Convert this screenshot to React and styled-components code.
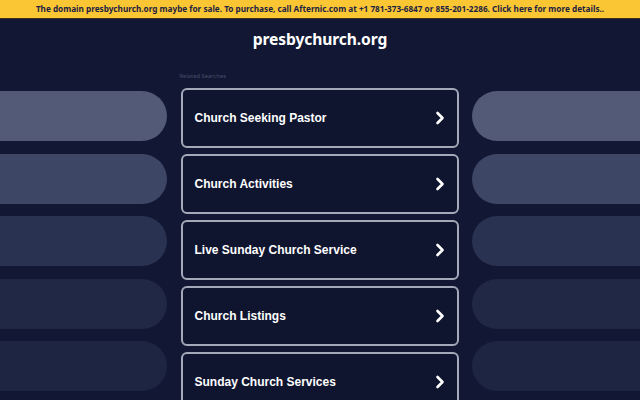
import React from "react";
import styled, { createGlobalStyle } from "styled-components";

const searches = [
  "Church Seeking Pastor",
  "Church Activities",
  "Live Sunday Church Service",
  "Church Listings",
  "Sunday Church Services",
];

const pillColors = ["#525a78", "#3e4665", "#2a3251", "#202846", "#1d2543"];

const Chevron = () => (
  <svg width="10" height="14" viewBox="0 0 10 14" fill="none">
    <path
      d="M2.5 2L7.5 7L2.5 12"
      stroke="#ffffff"
      strokeWidth="2.6"
      strokeLinecap="round"
      strokeLinejoin="round"
    />
  </svg>
);

const App = () => {
  return (
    <>
      <GlobalStyle />
      <Page>
        <TopBar>
          The domain presbychurch.org maybe for sale. To purchase, call
          Afternic.com at +1 781-373-6847 or 855-201-2286. Click here for more
          details..
        </TopBar>
        <Title>presbychurch.org</Title>
        <Main>
          <Side>
            {pillColors.map((c, idx) => (
              <Pill key={idx} $color={c} $side="left" />
            ))}
          </Side>
          <Center>
            <Label>Related Searches</Label>
            <List>
              {searches.map((s) => (
                <Card key={s}>
                  <span>{s}</span>
                  <Chevron />
                </Card>
              ))}
            </List>
          </Center>
          <Side>
            {pillColors.map((c, idx) => (
              <Pill key={idx} $color={c} $side="right" />
            ))}
          </Side>
        </Main>
      </Page>
    </>
  );
};

const GlobalStyle = createGlobalStyle`
  html, body {
    margin: 0;
    padding: 0;
    background: #121833;
  }
`;

const Page = styled.div`
  width: 640px;
  height: 400px;
  overflow: hidden;
  background: #121833;
  font-family: "Noto Sans", "Liberation Sans", sans-serif;
`;

const TopBar = styled.div`
  height: 18px;
  background: #fbc634;
  border-bottom: 1px solid #3a3322;
  color: #1b2240;
  font-size: 8.2px;
  font-weight: 700;
  line-height: 18px;
  text-align: center;
  white-space: nowrap;
`;

const Title = styled.h1`
  margin: 10px 0 0;
  color: #ffffff;
  font-size: 15.6px;
  line-height: 20px;
  font-weight: 700;
  text-align: center;
  letter-spacing: -0.1px;
`;

const Main = styled.div`
  display: grid;
  grid-template-columns: 167px 278px 1fr;
  column-gap: 13.5px;
  margin-top: 21px;
`;

const Side = styled.div`
  display: flex;
  flex-direction: column;
  gap: 12.5px;
  padding-top: 21px;
`;

const Pill = styled.div`
  height: 50px;
  background: ${(p) => p.$color};
  border-radius: ${(p) => (p.$side === "left" ? "0 25px 25px 0" : "25px 0 0 25px")};
`;

const Center = styled.div`
  display: flex;
  flex-direction: column;
`;

const Label = styled.div`
  height: 18px;
  color: #474e6c;
  font-size: 5.8px;
  line-height: 12px;
  margin-left: -1px;
`;

const List = styled.div`
  display: flex;
  flex-direction: column;
  gap: 6px;
`;

const Card = styled.div`
  box-sizing: border-box;
  height: 60px;
  display: flex;
  align-items: center;
  justify-content: space-between;
  padding: 0 12px;
  border: 2px solid #a4a9ba;
  border-radius: 6px;
  background: #10152f;
  color: #ffffff;
  font-family: "Liberation Sans", Arial, sans-serif;
  font-size: 12px;
  font-weight: 700;
`;

export default App;
